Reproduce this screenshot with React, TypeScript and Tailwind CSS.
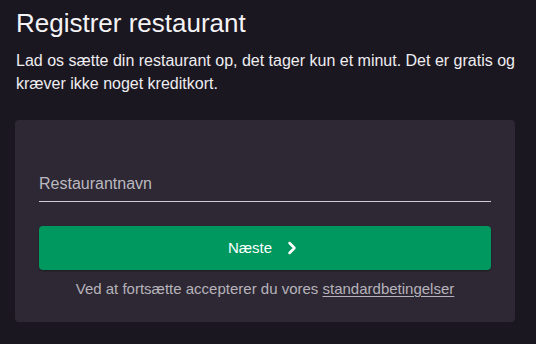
import { ChevronRight } from "lucide-react";

export default function App() {
  return (
    <div
      className="min-h-screen bg-[#1b1721] text-[#f4f3f5] px-[15px] pt-[8px] pb-6"
      style={{ fontFamily: '"Liberation Sans", Arial, sans-serif' }}
    >
      {/* Heading */}
      <h1 className="text-[26px] leading-[30px] pl-px">Registrer restaurant</h1>
      <p className="mt-[11px] pl-px text-[16px] leading-[23px] text-[#eeedf0]">
        Lad os sætte din restaurant op, det tager kun et minut. Det er gratis og
        kræver ikke noget kreditkort.
      </p>

      {/* Card */}
      <div className="mt-[25px] w-[500px] rounded bg-[#2d2833] px-6 pt-[52px] pb-[23px]">
        <div className="border-b border-[#cfcbd3] pb-[5px]">
          <input
            type="text"
            placeholder="Restaurantnavn"
            className="w-full bg-transparent text-[16px] leading-[24px] h-6 text-[#f4f3f5] placeholder:text-[#bcb8c0] outline-none"
          />
        </div>

        <button className="mt-[24px] flex h-11 w-full items-center justify-center gap-2.5 rounded-sm bg-[#00985f] text-[15px] text-white shadow-[0_1px_2px_rgba(0,0,0,0.35)]">
          <span>Næste</span>
          <ChevronRight className="h-5 w-5" strokeWidth={3} />
        </button>

        <p className="mt-[9px] text-center text-[15px] leading-[20px] text-[#b7b3bb]">
          Ved at fortsætte accepterer du vores{" "}
          <a href="#" className="underline underline-offset-2">
            standardbetingelser
          </a>
        </p>
      </div>
    </div>
  );
}
